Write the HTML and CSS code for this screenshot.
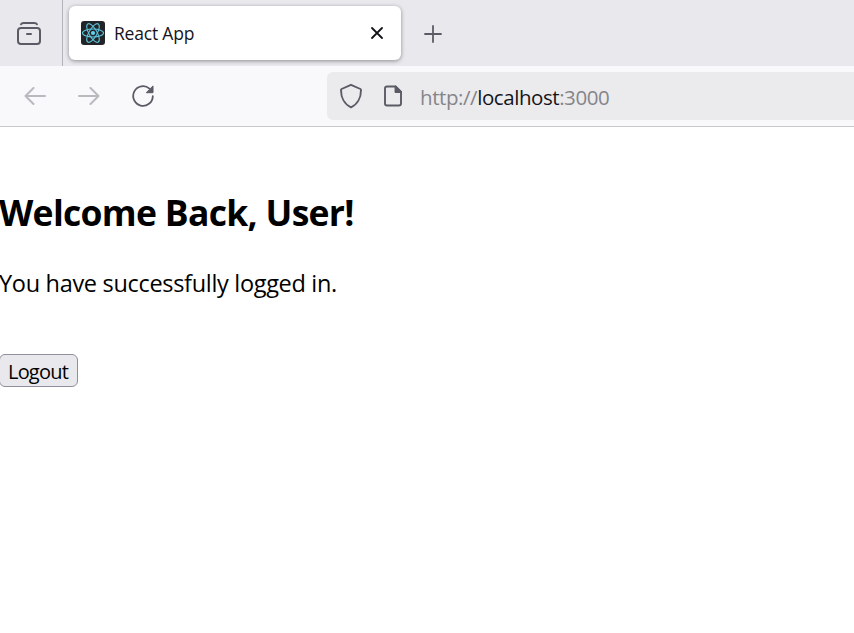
FILE: index.html
```html
<!DOCTYPE html>
<html lang="en">
<head>
<meta charset="utf-8">
<title>React App</title>
<link rel="stylesheet" href="styles.css">
</head>
<body>
<header class="tabbar">
  <div class="history">
    <svg width="26" height="26" viewBox="0 0 26 26" fill="none" stroke="#5b5b66" stroke-width="2" stroke-linecap="round"><path d="M5 3.200Q5.800 2 7.500 2h11Q20.200 2 21 3.200"/><rect x="2" y="7" width="22" height="16" rx="3"/><path d="M11 13h4"/></svg>
  </div>
  <div class="tab">
    <svg class="favicon" width="24" height="24" viewBox="0 0 24 24"><rect width="24" height="24" rx="3" fill="#222427"/><g fill="none" stroke="#5ec5de" stroke-width="1.100"><ellipse cx="12" cy="12" rx="10.500" ry="4"/><ellipse cx="12" cy="12" rx="10.500" ry="4" transform="rotate(60 12 12)"/><ellipse cx="12" cy="12" rx="10.500" ry="4" transform="rotate(120 12 12)"/></g><circle cx="12" cy="12" r="2.100" fill="#61d0eb"/></svg>
    <span class="tab-title">React App</span>
    <svg class="close" width="12" height="12" viewBox="0 0 12 12" stroke="#15141a" stroke-width="1.800" stroke-linecap="round"><path d="M1 1l10 10M11 1L1 11"/></svg>
  </div>
  <svg class="plus" width="18" height="18" viewBox="0 0 18 18" stroke="#5b5b66" stroke-width="1.800" stroke-linecap="round"><path d="M9 1v16M1 9h16"/></svg>
</header>
<nav class="toolbar">
  <div class="controls">
    <svg width="22" height="18" viewBox="0 0 22 18" fill="none" stroke="#b9b9c0" stroke-width="2" stroke-linecap="round" stroke-linejoin="round"><path d="M9.500 1L1.500 9l8 8M1.500 9H21"/></svg>
    <svg width="22" height="18" viewBox="0 0 22 18" fill="none" stroke="#b9b9c0" stroke-width="2" stroke-linecap="round" stroke-linejoin="round"><path d="M12.500 1l8 8-8 8M20.500 9H1"/></svg>
    <svg width="22" height="22" viewBox="0 0 22 22" fill="none" stroke="#5b5b66" stroke-width="1.800" stroke-linecap="round"><path d="M20.800 11.200A9.800 9.800 0 1 1 17.500 3.700"/><path d="M21 1.300v6.400h-6.400z" fill="#5b5b66" stroke-width="1" stroke-linejoin="round"/></svg>
  </div>
  <div class="urlbar">
    <svg width="24" height="26" viewBox="0 0 24 26" fill="none" stroke="#5b5b66" stroke-width="1.900" stroke-linejoin="round"><path d="M12 1.800L21.400 6q.6.300.6 1C22 14.500 18.500 21.500 12 24.300C5.500 21.500 2 14.500 2 7q0-.7.600-1z"/></svg>
    <svg class="doc" width="20" height="22" viewBox="0 0 20 22" fill="none" stroke="#5b5b66" stroke-width="1.900" stroke-linejoin="round"><path d="M12.500 1.500H4Q2 1.500 2 3.500v15Q2 20.500 4 20.500h12q2 0 2-2V7z"/><path d="M12.500 1.500V7H18z" fill="#5b5b66"/></svg>
    <span class="url">http://<b>localhost</b>:3000</span>
  </div>
</nav>
<main>
  <h2>Welcome Back, User!</h2>
  <p>You have successfully logged in.</p>
  <button>Logout</button>
</main>
</body>
</html>
```
FILE: styles.css
```css
* { box-sizing: border-box; }
body { margin: 0; height: 633px; overflow: hidden; background: #fff; color: #000; font-family: "Open Sans", "Noto Sans", sans-serif; }
svg { display: block; flex: none; }
.tabbar { display: flex; height: 66px; background: #e9e8ed; }
.history { width: 63px; height: 66px; border-right: 1px solid #b4b3bb; padding: 21px 0 0 16px; }
.tab { display: flex; align-items: center; width: 332px; height: 54px; margin: 6px 0 0 6px; padding: 0 18px 0 12px; background: #fff; border-radius: 6px; box-shadow: 0 1px 4px rgba(0, 0, 0, .4); }
.tab-title { flex: 1; margin-left: 9px; font-size: 17.500px; line-height: 24px; letter-spacing: -.2px; color: #15141a; }
.plus { margin: 25px 0 0 23px; }
.toolbar { display: flex; align-items: center; height: 61px; background: #f9f9fb; border-bottom: 1px solid #c8c8cb; }
.controls { display: flex; align-items: center; gap: 32px; width: 327px; padding-left: 24px; }
.urlbar { display: flex; align-items: center; flex: 1; height: 48px; margin-top: -1px; padding-left: 12px; background: #ebebed; border-radius: 6px 0 0 6px; }
.doc { margin-left: 20px; }
.url { margin-left: 17px; padding-top: 3px; font-size: 20.500px; letter-spacing: -.43px; color: #85858a; white-space: nowrap; }
.url b { font-weight: 400; color: #15141a; }
main { padding-top: 61px; }
h2 { margin: 0 0 0 -1px; font-size: 35.500px; line-height: 48px; letter-spacing: -.7px; white-space: nowrap; }
p { margin: 31px 0 0 -1px; font-size: 23.500px; line-height: 32px; letter-spacing: -.31px; white-space: nowrap; }
button { display: block; width: 79px; height: 33px; margin: 55px 0 0 -1px; padding: 2px 0 0 8px; text-align: left; font: 20px/30px "Open Sans", "Noto Sans", sans-serif; letter-spacing: -.8px; color: #000; background: #e9e9ed; border: 1px solid #8f8f9d; border-radius: 6px; }
```
